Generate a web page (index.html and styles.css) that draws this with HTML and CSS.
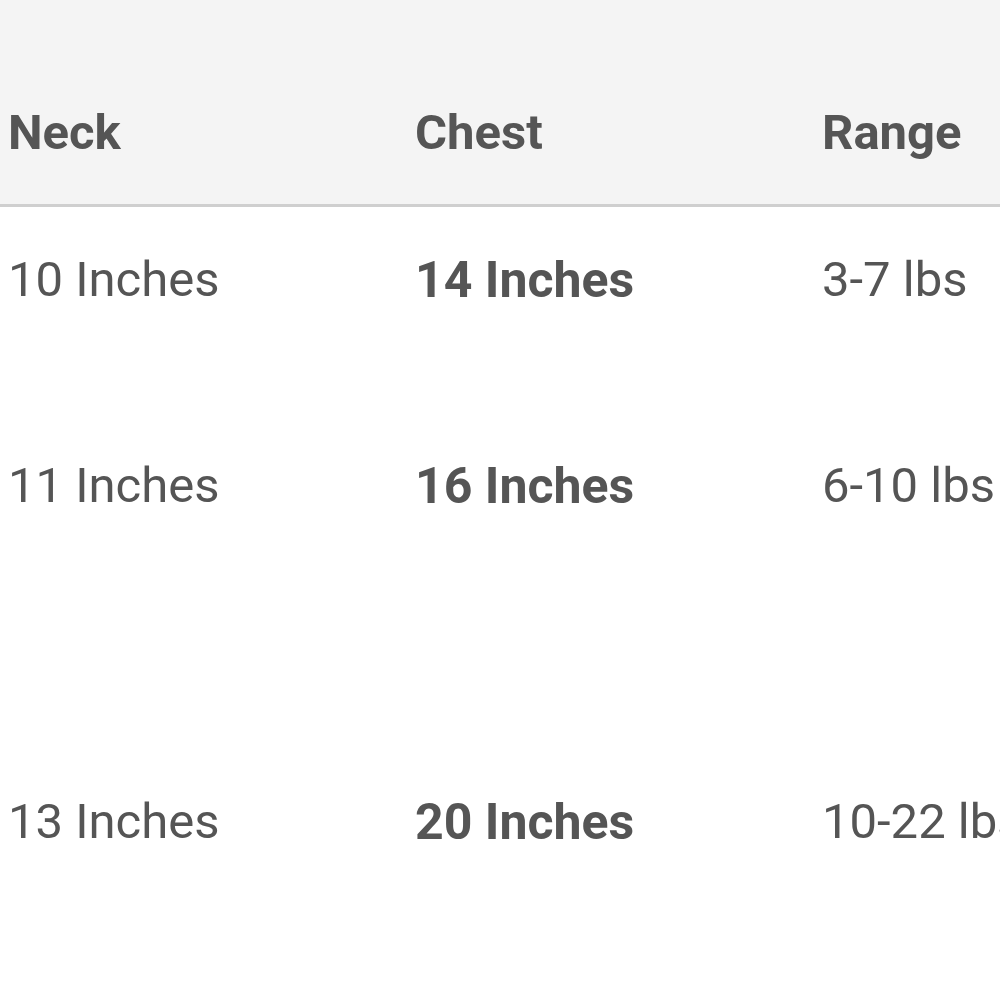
FILE: index.html
```html
<!DOCTYPE html>
<html lang="en">
<head>
    <meta charset="UTF-8">
    <meta name="viewport" content="width=device-width, initial-scale=1.0">
    <title>Size Chart</title>
    <link rel="stylesheet" href="styles.css">
</head>
<body>
    <table class="size-chart">
        <thead>
            <tr>
                <th>Neck</th>
                <th>Chest</th>
                <th>Range</th>
            </tr>
        </thead>
        <tbody>
            <tr class="row-small">
                <td>10 Inches</td>
                <td><strong>14 Inches</strong></td>
                <td>3-7 lbs</td>
            </tr>
            <tr class="row-medium">
                <td>11 Inches</td>
                <td><strong>16 Inches</strong></td>
                <td>6-10 lbs</td>
            </tr>
            <tr class="row-large">
                <td>13 Inches</td>
                <td><strong>20 Inches</strong></td>
                <td>10-22 lbs</td>
            </tr>
        </tbody>
    </table>
</body>
</html>
```

FILE: styles.css
```css
/* General Styles */
body {
    font-family: Roboto, "Liberation Sans", Arial, sans-serif;
    background-color: #ffffff;
    margin: 0;
    overflow: hidden;
}
/* Table */
.size-chart {
    border-collapse: collapse;
    table-layout: fixed;
    width: 1221px;
    color: #555;
    font-size: 49px;
    line-height: 56px;
}
.size-chart th,
.size-chart td {
    width: 391px;
    padding: 0 8px;
    text-align: left;
    vertical-align: top;
    white-space: nowrap;
}
/* Header */
.size-chart thead tr {
    background-color: #f4f4f4;
    border-bottom: 3px solid #cfcfcf;
}
.size-chart th {
    font-size: 49px;
    font-weight: 700;
    padding-top: 105px;
    padding-bottom: 43px;
}
/* Rows */
.size-chart td {
    padding-top: 45px;
}
.size-chart strong {
    font-size: 50px;
    font-weight: 700;
}
.row-small td {
    padding-bottom: 104px;
}
.row-medium td {
    padding-bottom: 234px;
}
.row-large td {
    padding-bottom: 104px;
}
```
